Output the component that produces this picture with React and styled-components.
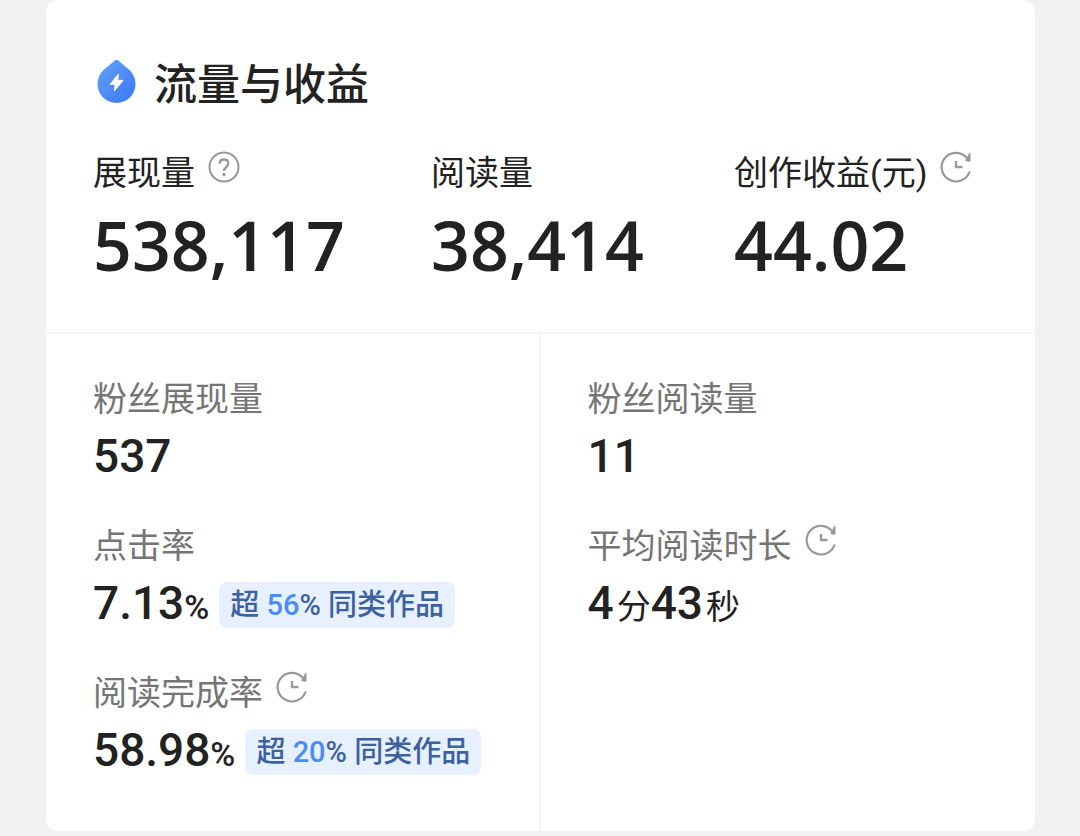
import React from "react"
import styled, { createGlobalStyle } from "styled-components"

const GlobalStyle = createGlobalStyle`
    * {
        box-sizing: border-box;
    }

    body {
        margin: 0;
        background: #f1f1f1;
        color: #222;
        font-family: Roboto, "Noto Sans CJK SC", sans-serif;
    }

    h2, dl, dt, dd {
        margin: 0;
        font-weight: 400;
    }
`

const Page = styled.main`
    padding: 0 45px 5px 46px;
`

const Card = styled.section`
    background: #fff;
    border-radius: 12px;
`

const Summary = styled.div`
    padding: 55px 47px 47px;
    border-bottom: 2px solid #f5f5f5;
`

const Header = styled.header`
    display: flex;
    align-items: flex-start;
    gap: 18px;
    padding-left: 4px;

    svg {
        margin-top: 5px;
    }
`

const Title = styled.h2`
    font-size: 43px;
    line-height: 60px;
    font-weight: 500;
`

const Totals = styled.dl`
    display: grid;
    grid-template-columns: 338fr 303fr 254fr;
    margin-top: 34px;
`

const Label = styled.dt`
    display: flex;
    gap: 13px;
    font-size: 34px;
    line-height: 48px;
    white-space: nowrap;
    color: ${props => (props.$muted ? "#757575" : "#222")};
`

const Total = styled.dd`
    margin-top: 8px;
    font-family: "Open Sans", sans-serif;
    font-size: 68px;
    line-height: 80px;
    font-weight: 600;
`

const HintButton = styled.button`
    display: block;
    width: 32px;
    height: 32px;
    margin-top: 2px;
    padding: 0;
    border: 0;
    background: none;
    color: #999;
    cursor: pointer;
`

const Details = styled.div`
    display: grid;
    grid-template-columns: 1fr 1fr;
`

const Column = styled.dl`
    display: flex;
    flex-direction: column;
    gap: 38px;
    padding: 41px 0 53px 47px;

    &:first-child {
        border-right: 2px solid #f5f5f5;
    }
`

const Value = styled.dd`
    display: flex;
    align-items: center;
    gap: 10px;
    height: 56px;
    margin-top: 5px;
    font-size: 46px;
    line-height: 56px;
    font-weight: 500;
    white-space: nowrap;
`

const Unit = styled.span`
    font-size: 34px;
    line-height: 1;
    font-weight: ${props => (props.$bold ? 500 : 400)};
    margin-left: ${props => (props.$bold ? 0 : "3px")};
`

const Badge = styled.span`
    margin-top: 3px;
    padding: 0 11px;
    border-radius: 8px;
    background: #e6f0ff;
    color: #3d609f;
    font-size: 29px;
    line-height: 46px;
`

const Highlight = styled.span`
    color: #4a8cf5;
`

const DropIcon = () => (
    <svg width="39" height="44" viewBox="0 0 39 44" aria-hidden="true">
        <defs>
            <linearGradient id="drop" x1="0" y1="0" x2="1" y2="1">
                <stop offset="0" stopColor="#62a0fb" />
                <stop offset="1" stopColor="#3a78f5" />
            </linearGradient>
        </defs>
        <path
            d="M17.8.6a2.700 2.700 0 0 1 3.400 0C24.500 3.700 29 6.800 33 10.600A19 19 0 1 1 6 10.600C10 6.800 14.500 3.700 17.800.6z"
            fill="url(#drop)"
        />
        <path d="M21.500 14 13 24.300h5.200L17.300 31 26 20.300h-5.400z" fill="#fff" stroke="#fff" strokeLinejoin="round" />
    </svg>
)

const HelpIcon = () => (
    <svg width="32" height="32" viewBox="0 0 32 32" fill="none" stroke="currentColor" strokeWidth="2" aria-hidden="true">
        <circle cx="16" cy="16" r="14.5" />
        <path d="M11.700 12.800c0-2.700 1.800-4.300 4.300-4.300s4.300 1.600 4.300 4c0 3.100-4.200 3.700-4.200 7.500" strokeWidth="2.300" />
        <circle cx="16" cy="23.500" r="1.700" fill="currentColor" stroke="none" />
    </svg>
)

const ClockIcon = () => (
    <svg width="32" height="32" viewBox="0 0 32 32" fill="none" stroke="currentColor" strokeWidth="2.200" strokeLinecap="round" aria-hidden="true">
        <path d="M29.300 21.300A14.300 14.300 0 1 1 27.300 7.400" />
        <path d="M29.700 2.800v7.200l-3.400-.6z" fill="currentColor" strokeWidth="1.600" strokeLinejoin="round" />
        <path d="M16 10v6h6.500" strokeWidth="2.400" strokeLinecap="butt" />
    </svg>
)

const Hint = ({ name, clock }) => (
    <HintButton type="button" aria-label={name}>
        {clock ? <ClockIcon /> : <HelpIcon />}
    </HintButton>
)

const Compare = ({ percent }) => (
    <Badge>
        超 <Highlight>{percent}</Highlight>% 同类作品
    </Badge>
)

const App = () => {
    return (
        <>
            <GlobalStyle />
            <Page>
                <Card>
                    <Summary>
                        <Header>
                            <DropIcon />
                            <Title>流量与收益</Title>
                        </Header>
                        <Totals>
                            <div>
                                <Label>
                                    展现量
                                    <Hint name="展现量" />
                                </Label>
                                <Total>538,117</Total>
                            </div>
                            <div>
                                <Label>阅读量</Label>
                                <Total>38,414</Total>
                            </div>
                            <div>
                                <Label>
                                    创作收益(元)
                                    <Hint name="创作收益" clock />
                                </Label>
                                <Total>44.02</Total>
                            </div>
                        </Totals>
                    </Summary>
                    <Details>
                        <Column>
                            <div>
                                <Label $muted>粉丝展现量</Label>
                                <Value>537</Value>
                            </div>
                            <div>
                                <Label $muted>点击率</Label>
                                <Value>
                                    <span>7.13<Unit $bold>%</Unit></span>
                                    <Compare percent={56} />
                                </Value>
                            </div>
                            <div>
                                <Label $muted>
                                    阅读完成率
                                    <Hint name="阅读完成率" clock />
                                </Label>
                                <Value>
                                    <span>58.98<Unit $bold>%</Unit></span>
                                    <Compare percent={20} />
                                </Value>
                            </div>
                        </Column>
                        <Column>
                            <div>
                                <Label $muted>粉丝阅读量</Label>
                                <Value>11</Value>
                            </div>
                            <div>
                                <Label $muted>
                                    平均阅读时长
                                    <Hint name="平均阅读时长" clock />
                                </Label>
                                <Value>
                                    <span>4<Unit>分</Unit>43<Unit>秒</Unit></span>
                                </Value>
                            </div>
                        </Column>
                    </Details>
                </Card>
            </Page>
        </>
    )
}

export default App
